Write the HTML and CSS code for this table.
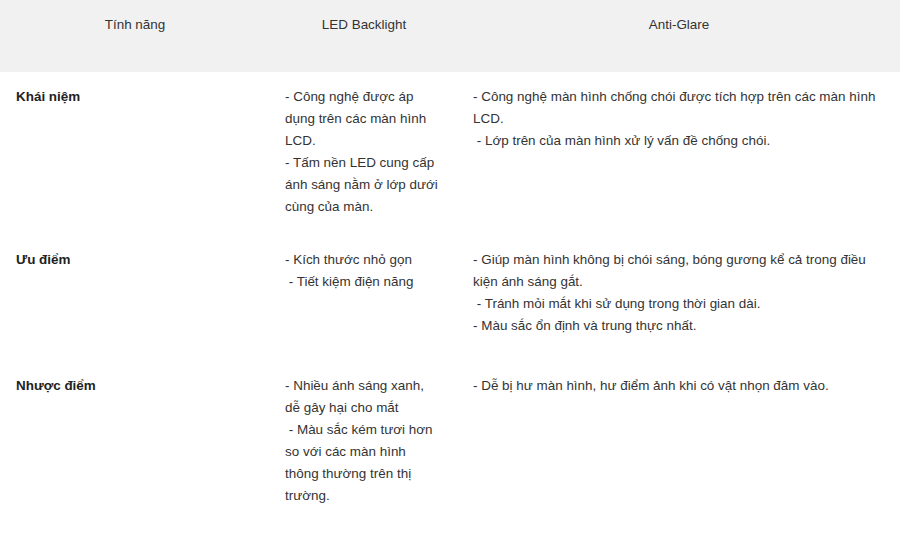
FILE: index.html
```html
<!DOCTYPE html>
<html lang="vi">
<head>
<meta charset="utf-8">
<title>So sánh</title>
<link rel="stylesheet" href="styles.css">
</head>
<body>
<div class="table">
  <div class="row head">
    <div class="cell c1">Tính năng</div>
    <div class="cell c2">LED Backlight</div>
    <div class="cell c3">Anti-Glare</div>
  </div>
  <div class="row r1">
    <div class="cell c1"><b>Khái niệm</b></div>
    <div class="cell c2">- Công nghệ được áp dụng trên các màn hình LCD.<br>- Tấm nền LED cung cấp ánh sáng nằm ở lớp dưới cùng của màn.</div>
    <div class="cell c3">- Công nghệ màn hình chống chói được tích hợp trên các màn hình LCD.<br>&nbsp;- Lớp trên của màn hình xử lý vấn đề chống chói.</div>
  </div>
  <div class="row r2">
    <div class="cell c1"><b>Ưu điểm</b></div>
    <div class="cell c2">- Kích thước nhỏ gọn<br>&nbsp;- Tiết kiệm điện năng</div>
    <div class="cell c3">- Giúp màn hình không bị chói sáng, bóng gương kể cả trong điều kiện ánh sáng gắt.<br>&nbsp;- Tránh mỏi mắt khi sử dụng trong thời gian dài.<br>- Màu sắc ổn định và trung thực nhất.</div>
  </div>
  <div class="row r3">
    <div class="cell c1"><b>Nhược điểm</b></div>
    <div class="cell c2">- Nhiều ánh sáng xanh, dễ gây hại cho mắt<br>&nbsp;- Màu sắc kém tươi hơn so với các màn hình thông thường trên thị trường.</div>
    <div class="cell c3">- Dễ bị hư màn hình, hư điểm ảnh khi có vật nhọn đâm vào.</div>
  </div>
</div>
</body>
</html>
```
FILE: styles.css
```css
html, body {
  margin: 0;
  padding: 0;
  background: #ffffff;
}
body {
  font-family: "Liberation Sans", Arial, sans-serif;
  font-size: 13.45px;
  line-height: 22px;
  color: #333333;
}
.table {
  width: 900px;
}
.row {
  display: grid;
  grid-template-columns: 270px 188px 442px;
}
.cell {
  padding: 14px 15px 0 15px;
}
.c1 {
  padding-left: 16px;
}
.c2 {
  padding-right: 18px;
}
.head {
  background: #f1f1f1;
  height: 72px;
}
.head .cell {
  text-align: center;
  padding: 14px 15px 0 15px;
}
.r1 { height: 163px; }
.r2 { height: 126px; }
.r3 { height: 189px; }
b {
  font-weight: bold;
  color: #222222;
}
```
